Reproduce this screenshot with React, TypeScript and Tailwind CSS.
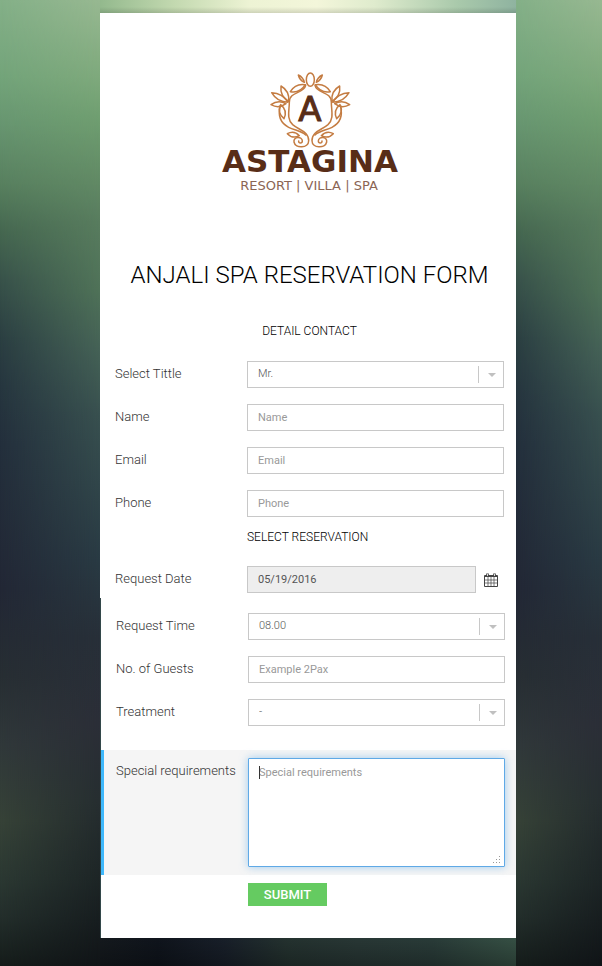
import React from "react";

const leaves: [number, number, number, number, number][] = [
  [313, 67, 295, 45, 7],
  [271, 95, 316, 74, 17],
  [266, 124, 243, 78, 17],
  [264, 127, 215, 98, 16],
  [258, 131, 213, 134, 15],
  [252, 176, 242, 134, 17],
  [262, 221, 298, 227, 14],
];

function leafPath([x1, y1, x2, y2, w]: [number, number, number, number, number]) {
  const dx = x2 - x1;
  const dy = y2 - y1;
  const length = Math.hypot(dx, dy);
  const nx = (-dy / length) * w;
  const ny = (dx / length) * w;
  const mx = (x1 + x2) / 2;
  const my = (y1 + y2) / 2;
  return `M${x1} ${y1}Q${mx + nx} ${my + ny} ${x2} ${y2}Q${mx - nx} ${my - ny} ${x1} ${y1}Z`;
}

function Branch() {
  return (
    <>
      {leaves.map((leaf) => (
        <path key={leaf.join("-")} d={leafPath(leaf)} />
      ))}
      <path d="M317 76C312 101 267 94 268 127C268 151 259 177 278 194C298 211 326 214 326 242C326 265 286 267 282 246C279 229 307 228 307 243C307 251 295 251 296 243" />
      <path d="M241 137C232 170 245 191 266 202C284 211 305 213 317 225" />
    </>
  );
}

function Logo() {
  return (
    <svg
      viewBox="0 0 220 140"
      className="mx-auto block h-[140px] w-[220px]"
      role="img"
      aria-label="Astagina Resort, Villa, Spa"
    >
      <g transform="scale(0.33333)" fill="none" stroke="#c47c42" strokeWidth="4.5" strokeLinecap="round" strokeLinejoin="round">
        <ellipse cx="331" cy="59" rx="12" ry="20" />
        <Branch />
        <g transform="translate(662 0) scale(-1 1)">
          <Branch />
        </g>
      </g>
      <g textAnchor="middle" fill="#582d17" className="font-['DejaVu_Sans',sans-serif]">
        <text x="110" y="61" fontSize="34" stroke="#582d17" className="font-normal">A</text>
        <text x="110" y="112" fontSize="31" className="font-bold">ASTAGINA</text>
        <text x="109" y="130" fontSize="13" fill="#8b6554" className="font-normal">
          RESORT | VILLA | SPA
        </text>
      </g>
    </svg>
  );
}

function Backdrop() {
  return (
    <div className="relative overflow-hidden bg-[linear-gradient(to_bottom,#84b088_0%,#73a47a_8%,#679570_13%,#58805f_19%,#456750_24%,#38524a_29%,#2b3f42_35%,#26363f_40%,#232f3c_46%,#222735_61%,#272e33_70%,#30383a_77%,#364237_85%,#2b3832_91%,#232e2b_95%,#151c1a_100%)]">
      <div className="absolute inset-0 bg-[linear-gradient(to_bottom,#97b891_0%,#7ea97c_8%,#709f71_12%,#658f68_17%,#587c5e_23%,#4f7258_30%,#456256_36%,#38504f_43%,#31464a_50%,#293a43_58%,#272f38_66%,#2b2e37_75%,#262e30_83%,#1d2526_91%,#101417_100%)] [mask-image:linear-gradient(to_right,transparent,black)]" />
    </div>
  );
}

const control =
  "block h-[27px] w-full rounded-none border border-[#c8c8c8] bg-white px-[10px] text-[11px] text-[#555] outline-none placeholder:font-normal placeholder:text-[#999]";

function Row({ id, label, children }: { id: string; label: string; children: React.ReactNode }) {
  return (
    <div className="grid grid-cols-[132px_1fr]">
      <label htmlFor={id} className="whitespace-nowrap pt-[3px] text-[13px] leading-5 text-[#333]">
        {label}
      </label>
      {children}
    </div>
  );
}

function Dropdown({ id, options }: { id: string; options: string[] }) {
  return (
    <div className="relative">
      <select id={id} className={control + " appearance-none"}>
        {options.map((option) => (
          <option key={option}>{option}</option>
        ))}
      </select>
      <span className="pointer-events-none absolute inset-y-[5px] right-0 flex w-[26px] items-center justify-center border-l border-[#c8c8c8]">
        <svg viewBox="0 0 8 4" className="h-1 w-2" fill="#c0c0c0">
          <path d="M0 0h8L4 4z" />
        </svg>
      </span>
    </div>
  );
}

function CalendarIcon() {
  return (
    <svg viewBox="0 0 14 14" className="h-[14px] w-[14px]" fill="none" stroke="#444">
      <path d="M.5 2.5h13v11H.5z" />
      <path d="M1 3h12" strokeWidth="2" />
      <path d="M4 4v9M7 4v9M10 4v9M1 7h12M1 10h12" strokeWidth=".7" />
      <path d="M3.5 .5v2.5M10.5 .5v2.5" strokeWidth="2.6" />
      <path d="M3.5 1v2M10.5 1v2" stroke="#fff" strokeWidth=".8" />
    </svg>
  );
}

export default function App() {
  return (
    <div className="grid min-h-screen grid-cols-[100fr_416fr_86fr] font-[Roboto,sans-serif] font-light">
      <Backdrop />
      <main className="flex flex-col">
        <div className="h-[13px] bg-[linear-gradient(to_top,#0002,transparent_6px),linear-gradient(to_right,#93b98d,#c3d9b0_18%,#edf3d4_36%,#f3f6da_52%,#dfebcd_66%,#a9c9ab_86%,#8fb3a0)]" />
        <form className="bg-white" onSubmit={(event) => event.preventDefault()}>
          <div className="pl-[15px] pr-3 pt-[47px]">
            <Logo />
            <h1 className="mt-[59px] whitespace-nowrap text-center text-[24px] leading-8 text-black">
              ANJALI SPA RESERVATION FORM
            </h1>
            <h2 className="mt-8 text-center text-[12px] leading-4 text-black">DETAIL CONTACT</h2>
            <div className="mt-[22px] flex flex-col gap-4">
              <Row id="title" label="Select Tittle">
                <Dropdown id="title" options={["Mr.", "Mrs.", "Ms."]} />
              </Row>
              <Row id="name" label="Name">
                <input id="name" type="text" placeholder="Name" className={control} />
              </Row>
              <Row id="email" label="Email">
                <input id="email" type="email" placeholder="Email" className={control} />
              </Row>
              <Row id="phone" label="Phone">
                <input id="phone" type="tel" placeholder="Phone" className={control} />
              </Row>
            </div>
            <h2 className="ml-[132px] mt-3 text-[12px] leading-4 text-black">SELECT RESERVATION</h2>
            <div className="mt-[21px] pb-[5px]">
              <Row id="date" label="Request Date">
                <div className="flex items-center gap-2">
                  <input
                    id="date"
                    type="text"
                    readOnly
                    value="05/19/2016"
                    className="block h-[27px] w-full min-w-0 flex-1 border border-[#c8c8c8] bg-[#eee] px-[10px] text-[11px] font-normal text-[#555] outline-none"
                  />
                  <button type="button" aria-label="Choose date" className="mr-[6px]">
                    <CalendarIcon />
                  </button>
                </div>
              </Row>
            </div>
          </div>
          <div className="border-l border-[#33484a]">
            <div className="flex flex-col gap-4 pb-6 pl-[15px] pr-[11px] pt-[15px]">
              <Row id="time" label="Request Time">
                <Dropdown id="time" options={["08.00", "09.00", "10.00"]} />
              </Row>
              <Row id="guests" label="No. of Guests">
                <input id="guests" type="text" placeholder="Example 2Pax" className={control} />
              </Row>
              <Row id="treatment" label="Treatment">
                <Dropdown id="treatment" options={["-"]} />
              </Row>
            </div>
            <div className="border-l-[3px] border-[#3fb8fb] bg-[#f5f5f5] py-2 pl-3 pr-[11px]">
              <Row id="special" label="Special requirements">
                <div className="relative">
                  <textarea
                    id="special"
                    placeholder="Special requirements"
                    className="block h-[109px] w-full resize-none rounded-[1px] border border-[#5fa9e6] bg-white px-[10px] py-[6px] text-[11px] leading-4 text-[#444] shadow-[0_0_8px_#66afe999] outline-none placeholder:font-normal placeholder:text-[#999]"
                  />
                  <span className="absolute left-[11px] top-2 h-[13px] w-px bg-[#333]" />
                  <svg viewBox="0 0 9 9" className="pointer-events-none absolute bottom-[3px] right-1 h-[9px] w-[9px]" fill="#999">
                    <path d="M7 1h1v1h-1zM4 4h1v1h-1zM7 4h1v1h-1zM1 7h1v1h-1zM4 7h1v1h-1zM7 7h1v1h-1z" />
                  </svg>
                </div>
              </Row>
            </div>
            <div className="pb-8 pl-[147px] pt-2">
              <button
                type="submit"
                className="block h-[23px] w-[79px] bg-[#65cb61] text-[13px] font-medium text-white"
              >
                SUBMIT
              </button>
            </div>
          </div>
        </form>
        <div className="min-h-7 flex-1 bg-[linear-gradient(to_top,#0004,transparent),linear-gradient(to_right,#14191d,#0f141c_14%,#181f29_30%,#24322f_45%,#283735_62%,#293b38_80%,#365044)]" />
      </main>
      <Backdrop />
    </div>
  );
}
